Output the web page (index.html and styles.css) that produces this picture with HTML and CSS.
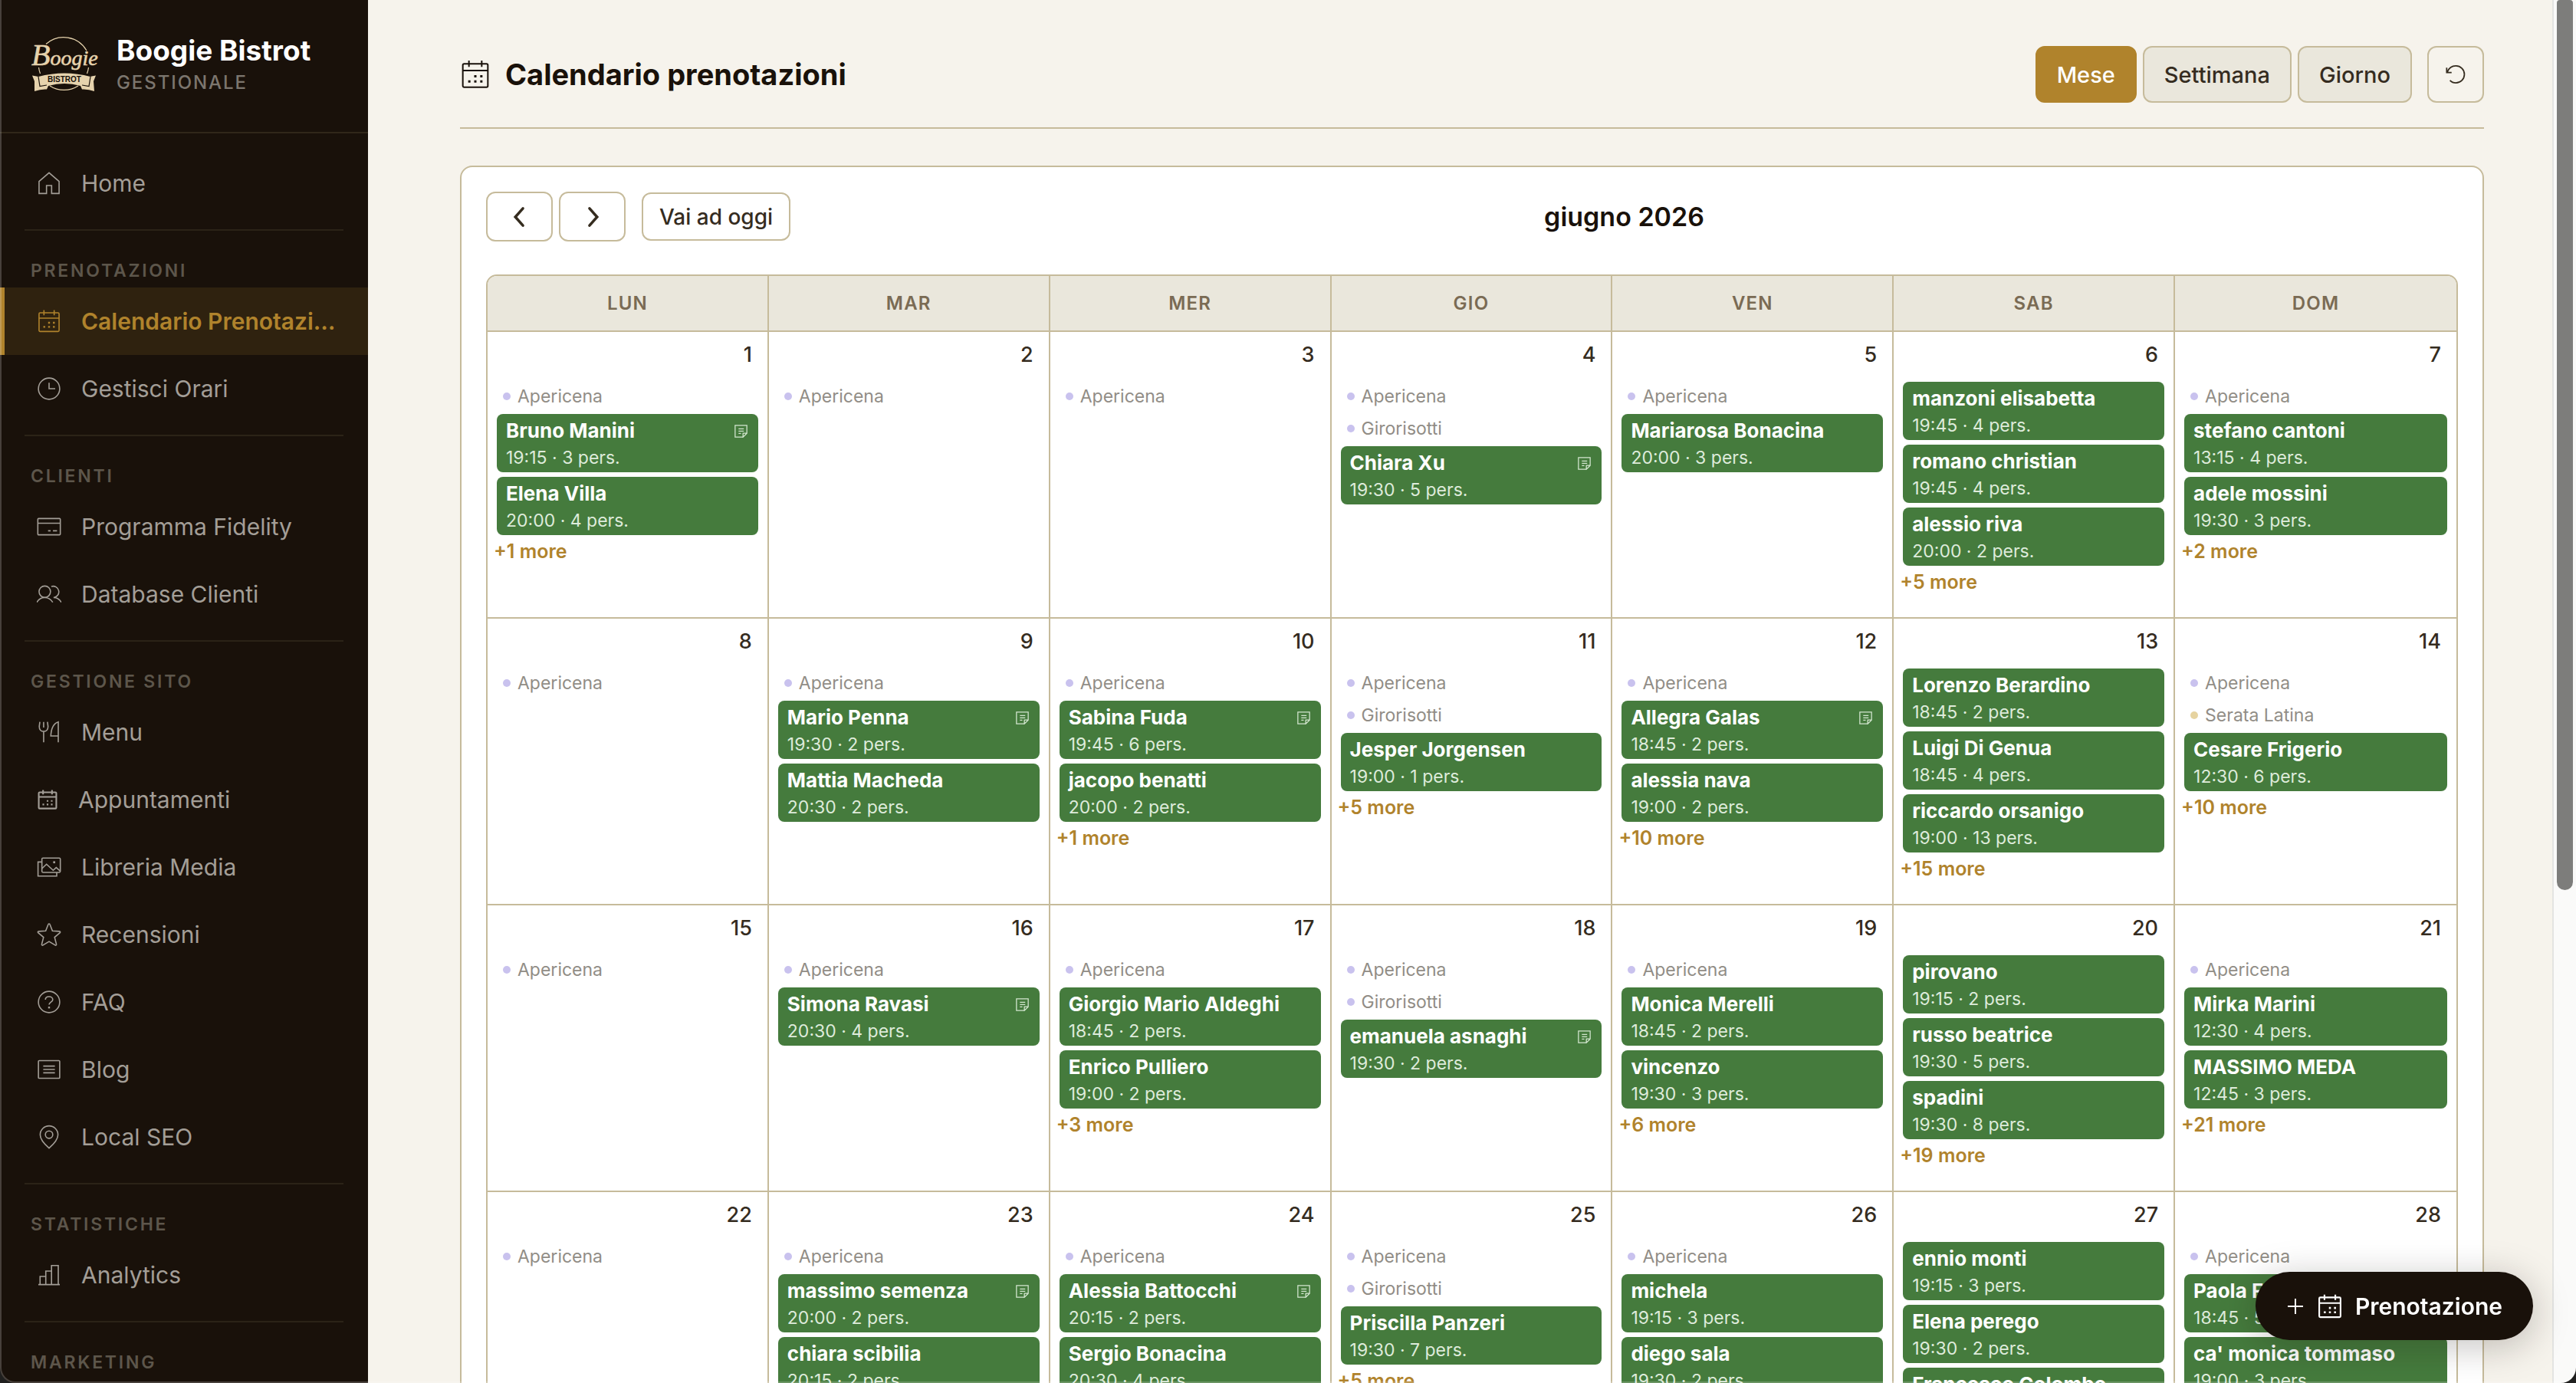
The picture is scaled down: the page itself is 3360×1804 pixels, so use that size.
FILE: index.html
```html
<!DOCTYPE html>
<html lang="it">
<head>
<meta charset="utf-8">
<title>Calendario prenotazioni - Boogie Bistrot</title>
<link rel="stylesheet" href="styles.css">
</head>
<body>
<svg class="sprite" aria-hidden="true">
  <symbol id="i-home" viewBox="0 0 24 24"><path d="M2.2 10.2 12 1.8l9.800 8.400V22h-7.300v-7.800h-5V22H2.200z"/></symbol>
  <symbol id="i-cal" viewBox="0 0 24 24"><rect x="2.200" y="3.800" width="19.600" height="18.200" rx="1"/><path d="M2.200 9h19.600M7 1.200v5M17 1.200v5"/><path class="dot" d="M11.100 12.600h1.800v1.800h-1.800zM15.800 12.600h1.800v1.800h-1.800zM6.400 16.600h1.800v1.800H6.400zM11.100 16.600h1.800v1.800h-1.800zM15.800 16.600h1.800v1.800h-1.800z"/></symbol>
  <symbol id="i-clock" viewBox="0 0 24 24"><circle cx="12" cy="12" r="10.400"/><path d="M12 6.200V12h6"/></symbol>
  <symbol id="i-card" viewBox="0 0 24 24"><rect x="1" y="4" width="22" height="16" rx=".8"/><path d="M1 8.600h22M11 16h2.500M15.800 16h4"/></symbol>
  <symbol id="i-users" viewBox="0 0 24 24"><circle cx="7.800" cy="9.600" r="5.600"/><path d="M0 20c1.600-2.700 4.400-4.600 7.800-4.600s6.200 1.900 7.800 4.600M14.200 4.500a5.600 5.600 0 1 1 2.200 10.900c3.300 0 6 1.900 7.600 4.600"/></symbol>
  <symbol id="i-menu" viewBox="0 0 24 24"><path d="M3 2 2.400 6.500c0 3 1.800 4.800 4.300 4.800S11 9.500 11 6.500L10.400 2M6.700 2v5.500M6.700 11.300V22M21 15.800h-7.300C14 9.500 16 3.500 21 2z M21 2v20"/></symbol>
  <symbol id="i-media" viewBox="0 0 24 24"><rect x="5" y="3.200" width="18" height="14" rx="1"/><path d="M19.500 17.200v3.600H1.200V7H5M5 13.500l4.500-4.300 6.500 6 3-2.700 4 3.600"/><path class="dot" d="M16 6.300h2v2h-2z"/></symbol>
  <symbol id="i-star" viewBox="0 0 24 24"><path d="M12 1.500c.4 0 .7.300.8.600l2.500 6.300 6.900.5c.8.100 1 .9.500 1.400l-5.300 4.400 1.800 6.900c.2.700-.6 1.200-1.200.8L12 18.800l-6 3.600c-.6.400-1.400-.1-1.200-.8l1.800-6.900L1.300 10.300c-.5-.5-.3-1.300.5-1.400l6.900-.5 2.500-6.300c.1-.3.400-.6.800-.6z"/></symbol>
  <symbol id="i-faq" viewBox="0 0 24 24"><circle cx="12" cy="12" r="10.400"/><path d="M8.400 9.800c0-1.900 1.600-3.100 3.600-3.100s3.600 1.200 3.600 3c0 2.300-3.600 2.500-3.600 4.900"/><path class="dot" d="M11.100 16.500h1.800v1.800h-1.800z"/></symbol>
  <symbol id="i-blog" viewBox="0 0 24 24"><rect x="1.600" y="3.400" width="20.800" height="17.200" rx=".8"/><path d="M6.300 8.700h11.400M6.300 12h11.400M6.300 15.300h11.400"/></symbol>
  <symbol id="i-pin" viewBox="0 0 24 24"><path d="M12 23C7 18.600 3.300 14.300 3.300 9.900a8.700 8.700 0 0 1 17.400 0C20.700 14.300 17 18.600 12 23z"/><circle cx="12" cy="9.800" r="3.600"/></symbol>
  <symbol id="i-chart" viewBox="0 0 24 24"><path d="M1.500 21.500h21M3.200 21.500v-8h5.600v8M8.800 21.500V8.300h5.600v13.200M14.400 21.500V2.800H21v18.700"/></symbol>
  <symbol id="i-note" viewBox="0 0 16 16"><path d="M10.500 15.200H.8V.8h14.400v9.700l-4.700 4.700v-4.700h4.700M5 5h6.500M5 7.800h6.500M5 10.600h3"/></symbol>
  <symbol id="i-undo" viewBox="0 0 24 24"><path d="M2 4.500V10h5.500M2.600 9.600C4.200 5.300 8 2.500 12.300 2.500c5.200 0 9.500 4.200 9.500 9.500s-4.300 9.500-9.500 9.500c-2.800 0-5-1-6.600-2.800"/></symbol>
  <symbol id="i-prev" viewBox="0 0 24 24"><path d="M15.500 2.500 7 12l8.500 9.500"/></symbol>
  <symbol id="i-next" viewBox="0 0 24 24"><path d="M8.500 2.500 17 12l-8.500 9.500"/></symbol>
  <symbol id="i-plus" viewBox="0 0 24 24"><path d="M12 2v20M2 12h20"/></symbol>
</svg>

<div class="app">
  <aside class="sidebar">
    <header class="brand">
      <svg class="logo" viewBox="0 0 88 76" role="img" aria-label="Boogie Bistrot">
        <path class="ring" d="M20 13.500a34.500 34.500 0 0 1 53 8.500M10.500 44a34 34 0 0 0 2 8M75.500 44a34 34 0 0 1-2 8M25 68a34 34 0 0 0 37 0"/>
        <g transform="translate(0 4)">
          <path class="ribbon" d="M10 52q34-9 68 0l1.500-.5 5.500-1-3 7.500 1 13q-8-3-16-2.500l-2-4.500q-21-6-42 0l-2 4.500q-8-.5-16 2.500L5 58 2 50.500l5.500 1z"/>
          <path class="fold" d="M10 52l2 12.500 9-1.500M78 52l-2 12.500-9-1.500"/>
          <text class="plate" x="44" y="59" text-anchor="middle">BISTROT</text>
        </g>
        <text class="script" x="1" y="41"><tspan class="initial">B</tspan>oogie</text>
      </svg>
      <div>
        <div class="brand-name">Boogie Bistrot</div>
        <div class="brand-sub">GESTIONALE</div>
      </div>
    </header>
    <nav class="nav">
      <a href="#"><svg><use href="#i-home"/></svg><span>Home</span></a>
      <hr>
      <h2>PRENOTAZIONI</h2>
      <a href="#" class="active"><svg><use href="#i-cal"/></svg><span>Calendario Prenotazioni</span></a>
      <a href="#"><svg><use href="#i-clock"/></svg><span>Gestisci Orari</span></a>
      <hr>
      <h2>CLIENTI</h2>
      <a href="#"><svg><use href="#i-card"/></svg><span>Programma Fidelity</span></a>
      <a href="#"><svg><use href="#i-users"/></svg><span>Database Clienti</span></a>
      <hr>
      <h2>GESTIONE SITO</h2>
      <a href="#"><svg><use href="#i-menu"/></svg><span>Menu</span></a>
      <a href="#" class="compact"><svg><use href="#i-cal"/></svg><span>Appuntamenti</span></a>
      <a href="#"><svg><use href="#i-media"/></svg><span>Libreria Media</span></a>
      <a href="#"><svg><use href="#i-star"/></svg><span>Recensioni</span></a>
      <a href="#"><svg><use href="#i-faq"/></svg><span>FAQ</span></a>
      <a href="#"><svg><use href="#i-blog"/></svg><span>Blog</span></a>
      <a href="#"><svg><use href="#i-pin"/></svg><span>Local SEO</span></a>
      <hr>
      <h2>STATISTICHE</h2>
      <a href="#"><svg><use href="#i-chart"/></svg><span>Analytics</span></a>
      <hr>
      <h2>MARKETING</h2>
    </nav>
  </aside>

  <main class="main">
    <header class="page-head">
      <svg class="head-icon"><use href="#i-cal"/></svg>
      <h1>Calendario prenotazioni</h1>
      <div class="views">
        <button type="button" class="btn primary">Mese</button>
        <button type="button" class="btn">Settimana</button>
        <button type="button" class="btn">Giorno</button>
      </div>
      <button type="button" class="btn refresh" aria-label="Aggiorna"><svg><use href="#i-undo"/></svg></button>
    </header>

    <section class="card">
      <div class="toolbar">
        <div class="tools">
          <button type="button" class="arrow" aria-label="Mese precedente"><svg><use href="#i-prev"/></svg></button>
          <button type="button" class="arrow" aria-label="Mese successivo"><svg><use href="#i-next"/></svg></button>
          <button type="button" class="today">Vai ad oggi</button>
        </div>
        <h2 class="month">giugno 2026</h2>
        <div></div>
      </div>
      <div class="grid">
        <table>
          <thead><tr><th>LUN</th><th>MAR</th><th>MER</th><th>GIO</th><th>VEN</th><th>SAB</th><th>DOM</th></tr></thead>
          <tbody>
            <tr>
              <td><div class="num">1</div>
                <div class="tag">Apericena</div>
                <div class="ev"><b>Bruno Manini</b><svg><use href="#i-note"/></svg><span>19:15 · 3 pers.</span></div>
                <div class="ev"><b>Elena Villa</b><span>20:00 · 4 pers.</span></div>
                <a href="#" class="more">+1 more</a></td>
              <td><div class="num">2</div>
                <div class="tag">Apericena</div></td>
              <td><div class="num">3</div>
                <div class="tag">Apericena</div></td>
              <td><div class="num">4</div>
                <div class="tag">Apericena</div>
                <div class="tag">Girorisotti</div>
                <div class="ev"><b>Chiara Xu</b><svg><use href="#i-note"/></svg><span>19:30 · 5 pers.</span></div></td>
              <td><div class="num">5</div>
                <div class="tag">Apericena</div>
                <div class="ev"><b>Mariarosa Bonacina</b><span>20:00 · 3 pers.</span></div></td>
              <td><div class="num">6</div>
                <div class="ev"><b>manzoni elisabetta</b><span>19:45 · 4 pers.</span></div>
                <div class="ev"><b>romano christian</b><span>19:45 · 4 pers.</span></div>
                <div class="ev"><b>alessio riva</b><span>20:00 · 2 pers.</span></div>
                <a href="#" class="more">+5 more</a></td>
              <td><div class="num">7</div>
                <div class="tag">Apericena</div>
                <div class="ev"><b>stefano cantoni</b><span>13:15 · 4 pers.</span></div>
                <div class="ev"><b>adele mossini</b><span>19:30 · 3 pers.</span></div>
                <a href="#" class="more">+2 more</a></td>
            </tr>
            <tr>
              <td><div class="num">8</div>
                <div class="tag">Apericena</div></td>
              <td><div class="num">9</div>
                <div class="tag">Apericena</div>
                <div class="ev"><b>Mario Penna</b><svg><use href="#i-note"/></svg><span>19:30 · 2 pers.</span></div>
                <div class="ev"><b>Mattia Macheda</b><span>20:30 · 2 pers.</span></div></td>
              <td><div class="num">10</div>
                <div class="tag">Apericena</div>
                <div class="ev"><b>Sabina Fuda</b><svg><use href="#i-note"/></svg><span>19:45 · 6 pers.</span></div>
                <div class="ev"><b>jacopo benatti</b><span>20:00 · 2 pers.</span></div>
                <a href="#" class="more">+1 more</a></td>
              <td><div class="num">11</div>
                <div class="tag">Apericena</div>
                <div class="tag">Girorisotti</div>
                <div class="ev"><b>Jesper Jorgensen</b><span>19:00 · 1 pers.</span></div>
                <a href="#" class="more">+5 more</a></td>
              <td><div class="num">12</div>
                <div class="tag">Apericena</div>
                <div class="ev"><b>Allegra Galas</b><svg><use href="#i-note"/></svg><span>18:45 · 2 pers.</span></div>
                <div class="ev"><b>alessia nava</b><span>19:00 · 2 pers.</span></div>
                <a href="#" class="more">+10 more</a></td>
              <td><div class="num">13</div>
                <div class="ev"><b>Lorenzo Berardino</b><span>18:45 · 2 pers.</span></div>
                <div class="ev"><b>Luigi Di Genua</b><span>18:45 · 4 pers.</span></div>
                <div class="ev"><b>riccardo orsanigo</b><span>19:00 · 13 pers.</span></div>
                <a href="#" class="more">+15 more</a></td>
              <td><div class="num">14</div>
                <div class="tag">Apericena</div>
                <div class="tag sand">Serata Latina</div>
                <div class="ev"><b>Cesare Frigerio</b><span>12:30 · 6 pers.</span></div>
                <a href="#" class="more">+10 more</a></td>
            </tr>
            <tr>
              <td><div class="num">15</div>
                <div class="tag">Apericena</div></td>
              <td><div class="num">16</div>
                <div class="tag">Apericena</div>
                <div class="ev"><b>Simona Ravasi</b><svg><use href="#i-note"/></svg><span>20:30 · 4 pers.</span></div></td>
              <td><div class="num">17</div>
                <div class="tag">Apericena</div>
                <div class="ev"><b>Giorgio Mario Aldeghi</b><span>18:45 · 2 pers.</span></div>
                <div class="ev"><b>Enrico Pulliero</b><span>19:00 · 2 pers.</span></div>
                <a href="#" class="more">+3 more</a></td>
              <td><div class="num">18</div>
                <div class="tag">Apericena</div>
                <div class="tag">Girorisotti</div>
                <div class="ev"><b>emanuela asnaghi</b><svg><use href="#i-note"/></svg><span>19:30 · 2 pers.</span></div></td>
              <td><div class="num">19</div>
                <div class="tag">Apericena</div>
                <div class="ev"><b>Monica Merelli</b><span>18:45 · 2 pers.</span></div>
                <div class="ev"><b>vincenzo</b><span>19:30 · 3 pers.</span></div>
                <a href="#" class="more">+6 more</a></td>
              <td><div class="num">20</div>
                <div class="ev"><b>pirovano</b><span>19:15 · 2 pers.</span></div>
                <div class="ev"><b>russo beatrice</b><span>19:30 · 5 pers.</span></div>
                <div class="ev"><b>spadini</b><span>19:30 · 8 pers.</span></div>
                <a href="#" class="more">+19 more</a></td>
              <td><div class="num">21</div>
                <div class="tag">Apericena</div>
                <div class="ev"><b>Mirka Marini</b><span>12:30 · 4 pers.</span></div>
                <div class="ev"><b>MASSIMO MEDA</b><span>12:45 · 3 pers.</span></div>
                <a href="#" class="more">+21 more</a></td>
            </tr>
            <tr>
              <td><div class="num">22</div>
                <div class="tag">Apericena</div></td>
              <td><div class="num">23</div>
                <div class="tag">Apericena</div>
                <div class="ev"><b>massimo semenza</b><svg><use href="#i-note"/></svg><span>20:00 · 2 pers.</span></div>
                <div class="ev"><b>chiara scibilia</b><span>20:15 · 2 pers.</span></div></td>
              <td><div class="num">24</div>
                <div class="tag">Apericena</div>
                <div class="ev"><b>Alessia Battocchi</b><svg><use href="#i-note"/></svg><span>20:15 · 2 pers.</span></div>
                <div class="ev"><b>Sergio Bonacina</b><span>20:30 · 4 pers.</span></div></td>
              <td><div class="num">25</div>
                <div class="tag">Apericena</div>
                <div class="tag">Girorisotti</div>
                <div class="ev"><b>Priscilla Panzeri</b><span>19:30 · 7 pers.</span></div>
                <a href="#" class="more">+5 more</a></td>
              <td><div class="num">26</div>
                <div class="tag">Apericena</div>
                <div class="ev"><b>michela</b><span>19:15 · 3 pers.</span></div>
                <div class="ev"><b>diego sala</b><span>19:30 · 2 pers.</span></div></td>
              <td><div class="num">27</div>
                <div class="ev"><b>ennio monti</b><span>19:15 · 3 pers.</span></div>
                <div class="ev"><b>Elena perego</b><span>19:30 · 2 pers.</span></div>
                <div class="ev"><b>Francesco Colombo</b><span>19:30 · 2 pers.</span></div></td>
              <td><div class="num">28</div>
                <div class="tag">Apericena</div>
                <div class="ev"><b>Paola F.</b><span>18:45 · 5 pers.</span></div>
                <div class="ev"><b>ca' monica tommaso</b><span>19:00 · 3 pers.</span></div></td>
            </tr>
          </tbody>
        </table>
      </div>
    </section>
  </main>
</div>

<div class="scrollbar"><div class="thumb"></div></div>
<button type="button" class="fab"><svg class="plus"><use href="#i-plus"/></svg><svg class="cal"><use href="#i-cal"/></svg>Prenotazione</button>
<div class="frame"></div>
</body>
</html>
```
FILE: styles.css
```css
:root {
  --ink: #19110a;
  --text: #352c1f;
  --gold: #b0832c;
  --line: #c6bb9b;
  --sand: #eae7dc;
  --page: #f6f3ec;
  --green: #457b3d;
}

* { box-sizing: border-box; }

body {
  margin: 0;
  height: 100vh;
  overflow: hidden;
  font-family: Inter, "Liberation Sans", sans-serif;
  font-size: 29px;
  color: var(--text);
  background: var(--page);
}

button { font: inherit; color: inherit; margin: 0; padding: 0; cursor: pointer; }
a { color: inherit; text-decoration: none; }
svg { fill: none; stroke: currentColor; stroke-width: 1.2; flex: none; }
.dot { fill: currentColor; stroke: none; }
.sprite { display: none; }

.app { display: flex; height: 100vh; }

/* Sidebar */
.sidebar {
  flex: 0 0 480px;
  background: var(--ink);
  color: #a39e97;
  overflow: hidden;
}
.brand {
  display: flex;
  gap: 24px;
  height: 174px;
  padding: 44px 40px 0;
  border-bottom: 2px solid #30271a;
}
.logo { width: 88px; height: 76px; stroke: none; overflow: visible; }
.ring { stroke: #e6d3ad; stroke-width: 1.2; }
.ribbon { fill: #e6d3ad; }
.fold { stroke: var(--ink); stroke-width: 1.2; }
.script { font: italic 28px "Liberation Serif", serif; fill: #e6d3ad; stroke: #e6d3ad; stroke-width: 0.6; }
.initial { font-size: 40px; }
.plate { font: bold 10px "Liberation Sans", sans-serif; fill: var(--ink); }
.brand-name { font-size: 37px; line-height: 44px; font-weight: 700; color: #fff; }
.brand-sub { font-size: 24px; line-height: 40px; font-weight: 500; color: #7c766e; letter-spacing: 0.08em; }

.nav { padding-top: 21px; font-size: 30px; }
.nav a {
  display: flex;
  align-items: center;
  gap: 26px;
  height: 88px;
  padding: 0 36px 0 42px;
  border-left: 6px solid transparent;
}
.nav a svg { width: 32px; height: 32px; }
.nav a span { overflow: hidden; white-space: nowrap; text-overflow: ellipsis; }
.nav a.compact svg { width: 28px; height: 28px; stroke-width: 1.800; }
.nav a.active { background: #2f220f; border-color: var(--gold); color: var(--gold); font-weight: 600; }
.nav hr { height: 2px; margin: 16px 32px 0; border: 0; background: #2b2317; }
.nav h2 {
  margin: 0;
  padding: 34px 40px 4px;
  font-size: 23px;
  line-height: 36px;
  font-weight: 600;
  letter-spacing: 0.12em;
  color: #5d564b;
}

/* Page header */
.main { flex: 1; min-width: 0; padding: 60px 120px 0; overflow: hidden; }
.page-head {
  display: flex;
  align-items: center;
  padding-bottom: 32px;
  border-bottom: 2px solid var(--line);
  color: var(--ink);
}
.head-icon { width: 40px; height: 40px; margin-right: 19px; }
h1 { flex: 1; margin: 0; font-size: 38px; line-height: 48px; font-weight: 700; }
.views { display: flex; gap: 8px; margin-right: 20px; }
.btn {
  height: 74px;
  padding: 0 26px;
  border: 2px solid var(--line);
  border-radius: 12px;
  background: var(--sand);
  color: var(--text);
  font-weight: 500;
}
.btn.primary { background: var(--gold); border-color: var(--gold); color: #fff; }
.btn.refresh { width: 74px; padding: 0; background: none; }
.refresh svg { display: block; width: 28px; height: 28px; margin: 0 auto; stroke-width: 1.500; }

/* Calendar */
.card {
  margin-top: 48px;
  padding: 32px;
  border: 2px solid var(--line);
  border-radius: 16px;
  background: #fff;
}
.toolbar { display: flex; align-items: center; justify-content: space-between; margin-bottom: 43px; }
.tools { display: flex; align-items: center; gap: 8px; }
.arrow, .today { border: 2px solid var(--line); border-radius: 12px; background: #fff; }
.arrow { width: 87px; height: 65px; }
.arrow svg { display: block; width: 28px; height: 28px; margin: 0 auto; stroke-width: 3; stroke-linecap: round; }
.today { height: 63px; margin-left: 13px; padding: 0 21px; font-weight: 500; font-size: 28px; }
.month { margin: 0; font-size: 34px; line-height: 40px; font-weight: 600; color: var(--ink); }

.grid { border: 2px solid var(--line); border-radius: 14px; overflow: hidden; }
table { width: 100%; table-layout: fixed; border-spacing: 0; }
th {
  height: 73px;
  padding: 0;
  background: var(--sand);
  font-size: 24px;
  font-weight: 600;
  letter-spacing: 0.05em;
  color: #7a6b54;
}
th, td { border-right: 2px solid var(--line); border-bottom: 2px solid var(--line); }
th:last-child, td:last-child { border-right: 0; }
td { height: 374px; padding: 0 12px; vertical-align: top; }
.num { padding: 11px 8px 16px 0; line-height: 38px; font-size: 27px; font-weight: 500; text-align: right; }
.tag {
  display: flex;
  align-items: center;
  gap: 9px;
  margin-bottom: 4px;
  padding-left: 8px;
  font-size: 23px;
  line-height: 38px;
  color: #918d86;
}
.tag::before { content: ""; width: 10px; height: 10px; border-radius: 50%; background: #c9c2ee; }
.tag.sand::before { background: #e6d3a0; }
.ev {
  display: grid;
  grid-template-columns: 1fr auto;
  align-items: center;
  margin-bottom: 6px;
  padding: 4px 14px 2px 12px;
  border-radius: 8px;
  background: var(--green);
  color: #fff;
  white-space: nowrap;
}
.ev b { font-size: 26px; line-height: 36px; font-weight: 700; }
.ev svg { width: 17px; height: 17px; color: #d3e6cf; }
.ev span { grid-column: 1; font-size: 23px; line-height: 34px; color: #deebdb; }
.more { display: block; margin-left: -4px; font-size: 25px; line-height: 30px; font-weight: 600; color: var(--gold); }

/* Overlays */
.scrollbar {
  position: fixed;
  top: 0;
  right: 0;
  bottom: 0;
  width: 31px;
  padding: 0 4px;
  border-left: 2px solid #e4e4e2;
  background: #fafaf9;
}
.thumb { height: 64.350%; border-radius: 4px 4px 11px 11px; background: #7d7d7b; }
.fab {
  position: fixed;
  right: 56px;
  bottom: 56px;
  display: flex;
  align-items: center;
  height: 89px;
  padding: 0 40px;
  border: 0;
  border-radius: 45px;
  background: var(--ink);
  color: #fff;
  font-size: 30px;
  font-weight: 600;
  box-shadow: 0 8px 48px rgba(25, 17, 10, 0.25);
}
.fab .plus { width: 24px; height: 24px; margin-right: 16px; stroke-width: 2; }
.fab .cal { width: 34px; height: 34px; margin-right: 16px; stroke-width: 1.500; }
.frame {
  position: fixed;
  inset: 0;
  pointer-events: none;
  border: solid rgba(255, 255, 255, 0.2);
  border-width: 0 0 2px 2px;
  border-radius: 0 0 20px 20px;
  box-shadow: 0 0 0 20px #20201f;
}
```
